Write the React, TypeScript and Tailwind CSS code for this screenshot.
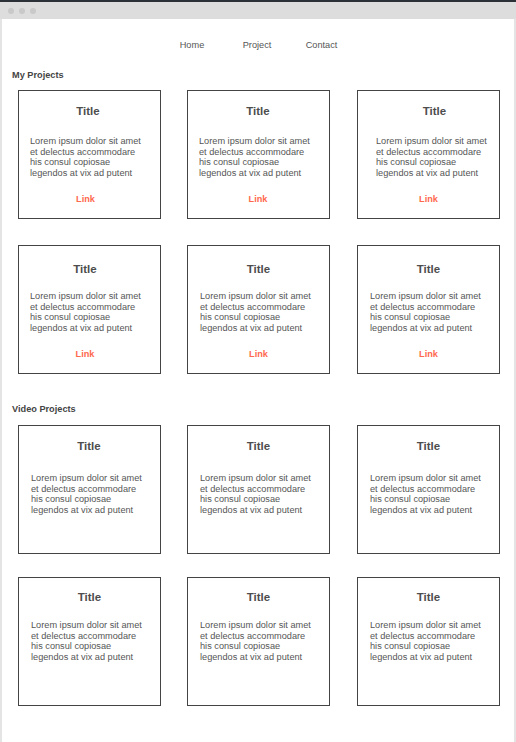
import React from "react";

type CardSpec = {
  title: string; // padding classes for nudging the centred title
  body: string; // left padding of the body text
  link: string; // padding classes for nudging the centred link
};

type RowSpec = {
  top: string; // padding above title
  gap: string; // gap between title and body
  hasLink: boolean;
  cards: CardSpec[];
};

const LINES = [
  "Lorem ipsum dolor sit amet",
  "et delectus accommodare",
  "his consul copiosae",
  "legendos at vix ad putent",
];

// horizontal spacing between the three cards in a row
const colGap = ["", "ml-[26px]", "ml-[27px]"];

const projectRows: RowSpec[] = [
  {
    top: "pt-[13px]",
    gap: "mt-[18px]",
    hasLink: true,
    cards: [
      { title: "pr-[3px]", body: "pl-[11px]", link: "pr-[8px]" },
      { title: "pr-[1px]", body: "pl-[11px]", link: "pr-[1px]" },
      { title: "pl-[12px]", body: "pl-[18px]", link: "" },
    ],
  },
  {
    top: "pt-[16px]",
    gap: "mt-[15px]",
    hasLink: true,
    cards: [
      { title: "pr-[9px]", body: "pl-[11px]", link: "pr-[9px]" },
      { title: "", body: "pl-[12px]", link: "" },
      { title: "", body: "pl-[12px]", link: "" },
    ],
  },
];

const videoRows: RowSpec[] = [
  {
    top: "pt-[13px]",
    gap: "mt-[20px]",
    hasLink: false,
    cards: [
      { title: "pr-[1px]", body: "pl-[12px]", link: "" },
      { title: "", body: "pl-[12px]", link: "" },
      { title: "", body: "pl-[12px]", link: "" },
    ],
  },
  {
    top: "pt-[12px]",
    gap: "mt-[16px]",
    hasLink: false,
    cards: [
      { title: "", body: "pl-[12px]", link: "" },
      { title: "", body: "pl-[12px]", link: "" },
      { title: "", body: "pl-[12px]", link: "" },
    ],
  },
];

function Card({ row, spec, idx }: { row: RowSpec; spec: CardSpec; idx: number }) {
  return (
    <div
      className={`w-[143px] h-[129px] border border-[#444444] flex flex-col ${row.top} ${colGap[idx]}`}
    >
      <div
        className={`h-[14px] leading-[14px] text-center text-[11.5px] font-bold text-[#4d4d4d] ${spec.title}`}
      >
        Title
      </div>
      <div className={`${row.gap} ${spec.body} text-[9.2px] leading-[10.5px] text-[#555555]`}>
        {LINES.map((l) => (
          <div key={l} className="whitespace-nowrap">
            {l}
          </div>
        ))}
      </div>
      {row.hasLink && (
        <div
          className={`mt-[15px] h-[12px] leading-[12px] text-center text-[9.2px] font-bold text-[#ff6a4f] ${spec.link}`}
        >
          Link
        </div>
      )}
    </div>
  );
}

function CardRow({ row, className }: { row: RowSpec; className: string }) {
  return (
    <div className={`flex pl-[16px] ${className}`}>
      {row.cards.map((c, i) => (
        <Card key={i} row={row} spec={c} idx={i} />
      ))}
    </div>
  );
}

export default function App() {
  return (
    <div
      className="w-[516px] h-[742px] bg-white flex flex-col overflow-hidden"
      style={{ fontFamily: '"Liberation Sans", Arial, sans-serif' }}
    >
      {/* window chrome */}
      <div className="h-[2px] bg-[#2c3037]" />
      <div className="h-[17px] bg-[#dddddd] flex items-center gap-[5px] pl-[8px]">
        <span className="w-[6px] h-[6px] rounded-full bg-[#c9c9c9]" />
        <span className="w-[6px] h-[6px] rounded-full bg-[#c9c9c9]" />
        <span className="w-[6px] h-[6px] rounded-full bg-[#c9c9c9]" />
      </div>

      <div className="flex-1 border-l-2 border-r-2 border-[#e4e4e4] flex flex-col">
        <nav className="mt-[20px] flex pl-[157px] h-[12px] leading-[12px] text-[9.2px] text-[#555555]">
          <span className="w-[66px] text-center">Home</span>
          <span className="w-[64px] text-center">Project</span>
          <span className="w-[65px] text-center">Contact</span>
        </nav>

        <h2 className="mt-[18px] pl-[10px] h-[12px] leading-[12px] text-[9.2px] font-bold text-[#444444]">
          My Projects
        </h2>
        <CardRow row={projectRows[0]} className="mt-[9px]" />
        <CardRow row={projectRows[1]} className="mt-[26px]" />

        <h2 className="mt-[29px] pl-[10px] h-[12px] leading-[12px] text-[9.2px] font-bold text-[#444444]">
          Video Projects
        </h2>
        <CardRow row={videoRows[0]} className="mt-[10px]" />
        <CardRow row={videoRows[1]} className="mt-[23px]" />
      </div>
    </div>
  );
}
